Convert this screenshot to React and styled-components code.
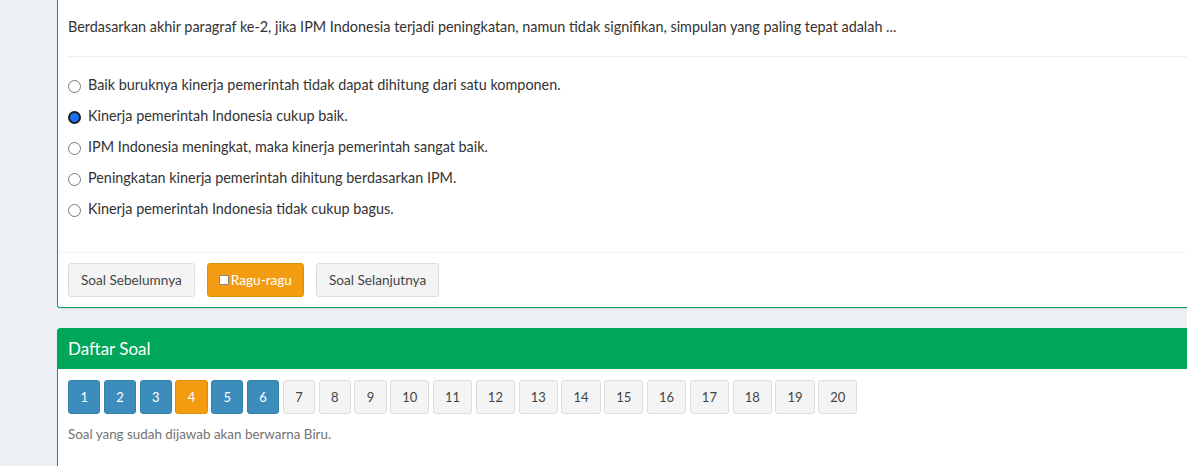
import styled, { createGlobalStyle } from 'styled-components'

const GlobalStyle = createGlobalStyle`
  html, body {
    margin: 0;
    padding: 0;
    background: #ecf0f5;
    overflow: hidden;
  }
  body {
    font-family: Lato, "Liberation Sans", sans-serif;
    color: #333;
    font-size: 14.4px;
  }
`

const options = [
  'Baik buruknya kinerja pemerintah tidak dapat dihitung dari satu komponen.',
  'Kinerja pemerintah Indonesia cukup baik.',
  'IPM Indonesia meningkat, maka kinerja pemerintah sangat baik.',
  'Peningkatan kinerja pemerintah dihitung berdasarkan IPM.',
  'Kinerja pemerintah Indonesia tidak cukup bagus.',
]

const answered = [1, 2, 3, 5, 6]
const doubtful = [4]

export default function App() {
  const numbers = Array.from({ length: 20 }, (_, i) => i + 1)

  return (
    <Page>
      <GlobalStyle />
      <Box $noTop>
        <BoxBody>
          <Question>
            Berdasarkan akhir paragraf ke-2, jika IPM Indonesia terjadi peningkatan, namun tidak
            signifikan, simpulan yang paling tepat adalah ...
          </Question>
          <Divider />
          <OptionList>
            {options.map((text, i) => (
              <OptionRow key={i}>
                <Radio type="radio" name="jawaban" defaultChecked={i === 1} />
                {text}
              </OptionRow>
            ))}
          </OptionList>
        </BoxBody>
        <BoxFooter>
          <Button>Soal Sebelumnya</Button>
          <Button $variant="warning" $tight>
            <CheckBox />
            Ragu-ragu
          </Button>
          <Button>Soal Selanjutnya</Button>
        </BoxFooter>
      </Box>

      <Box>
        <BoxHeader>
          <BoxTitle>Daftar Soal</BoxTitle>
        </BoxHeader>
        <BoxBody>
          <NumberGrid>
            {numbers.map((n) => (
              <NumberButton
                key={n}
                $wide={n >= 10}
                $variant={doubtful.includes(n) ? 'warning' : answered.includes(n) ? 'primary' : 'default'}
              >
                {n}
              </NumberButton>
            ))}
          </NumberGrid>
          <HelpText>Soal yang sudah dijawab akan berwarna Biru.</HelpText>
        </BoxBody>
        <BoxFooter />
      </Box>
    </Page>
  )
}

const Page = styled.div`
  padding-left: 57px;
  width: 1160px;
  display: flex;
  flex-direction: column;
  gap: 20px;
`

const Box = styled.div`
  background: #fff;
  border: 1px solid #00a65a;
  border-top: ${(p) => (p.$noTop ? 'none' : '1px solid #00a65a')};
  border-radius: ${(p) => (p.$noTop ? '0 0 3px 3px' : '3px')};
  box-shadow: 0 1px 1px rgba(0, 0, 0, 0.1);
`

const BoxHeader = styled.div`
  background: #00a65a;
  color: #fff;
  padding: 10px;
  height: 20px;
  display: flex;
  align-items: center;
`

const BoxTitle = styled.h3`
  margin: 0;
  font-size: 17px;
  font-weight: 400;
  line-height: 20px;
`

const BoxBody = styled.div`
  padding: 10px;
`

const Question = styled.p`
  margin: 7px 0 0;
  line-height: 20px;
`

const Divider = styled.hr`
  margin: 19px 0 18px;
  border: 0;
  border-top: 1px solid #eee;
`

const OptionList = styled.div`
  display: flex;
  flex-direction: column;
  gap: 11px;
  padding-bottom: 23px;
`

const OptionRow = styled.label`
  display: flex;
  align-items: center;
  gap: 7px;
  line-height: 20px;
`

const Radio = styled.input`
  appearance: none;
  margin: 3px 0 0;
  width: 13px;
  height: 13px;
  border-radius: 50%;
  border: 1px solid #7a7a7a;
  background: #fff;
  box-sizing: border-box;

  &:checked {
    border: 2px solid #1b1b1b;
    background: #1c72f2;
  }
`

const BoxFooter = styled.div`
  border-top: 1px solid #f4f4f4;
  padding: 10px;
  display: flex;
  gap: 12px;
`

const palette = {
  default: { bg: '#f4f4f4', border: '#ddd', color: '#444' },
  primary: { bg: '#3c8dbc', border: '#367fa9', color: '#fff' },
  warning: { bg: '#f39c12', border: '#e08e0b', color: '#fff' },
}

const Button = styled.button`
  font-family: inherit;
  font-size: 13.6px;
  height: 34px;
  padding: 0 ${(p) => (p.$tight ? '11px' : '12px')};
  border-radius: 3px;
  border: 1px solid ${(p) => palette[p.$variant || 'default'].border};
  background: ${(p) => palette[p.$variant || 'default'].bg};
  color: ${(p) => palette[p.$variant || 'default'].color};
  display: flex;
  align-items: center;
  gap: 2px;
`

const CheckBox = styled.span`
  display: inline-block;
  width: 8px;
  height: 8px;
  border: 1px solid #888;
  border-radius: 2px;
  background: #fff;
`

const NumberGrid = styled.div`
  display: flex;
  gap: 3.5px;
  padding-top: 1px;
`

const NumberButton = styled.button`
  font-family: inherit;
  font-size: 13px;
  height: 34px;
  width: ${(p) => (p.$wide ? '39.3px' : '32.3px')};
  padding: 0;
  border-radius: 3px;
  border: 1px solid ${(p) => palette[p.$variant].border};
  background: ${(p) => palette[p.$variant].bg};
  color: ${(p) => palette[p.$variant].color};
`

const HelpText = styled.p`
  margin: 10px 0 20px;
  font-size: 13.4px;
  line-height: 20px;
  color: #737373;
`
